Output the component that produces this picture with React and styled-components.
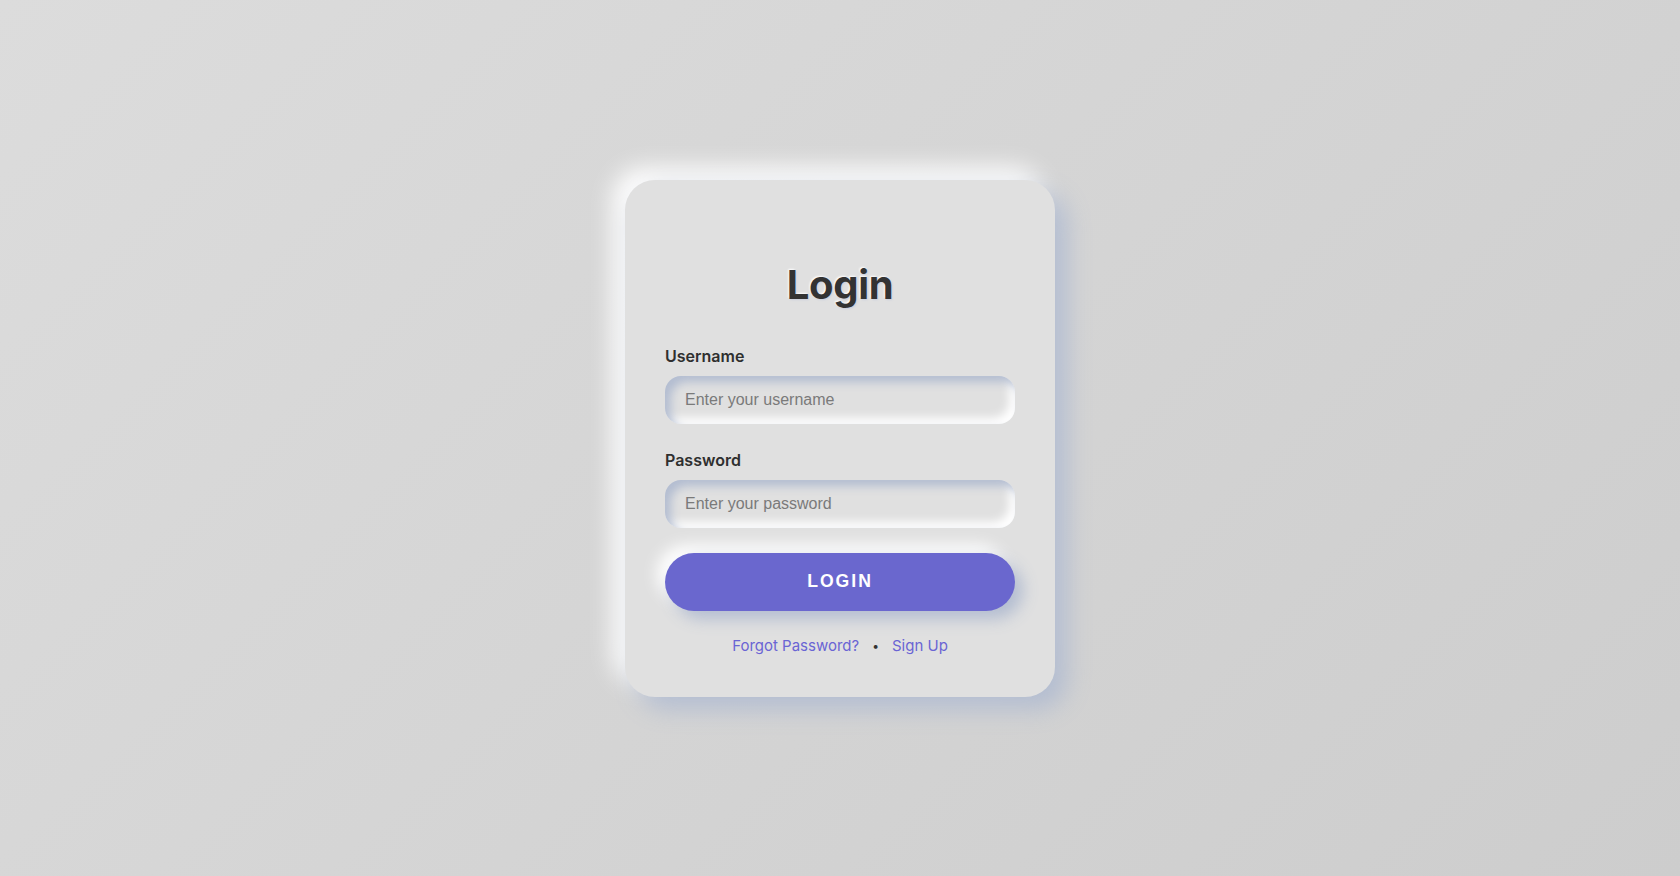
import React from "react";
import styled, { createGlobalStyle } from "styled-components";

const GlobalStyle = createGlobalStyle`
  * { box-sizing: border-box; }
  html, body { margin: 0; padding: 0; }
  body {
    font-family: Inter, "Noto Sans", sans-serif;
    background: linear-gradient(135deg, #dcdcdc 0%, #cdcdcd 100%);
    min-height: 100vh;
  }
`;

const Page = styled.div`
  height: 876px;
  display: flex;
  align-items: center;
  justify-content: center;
`;

const Card = styled.form`
  width: 430px;
  padding: 40px;
  background: #e0e0e0;
  border-radius: 30px;
  box-shadow: 12px 12px 24px #b3bdd1, -12px -12px 24px #ffffff;
  display: flex;
  flex-direction: column;
`;

const Title = styled.h2`
  margin: 41px 0 35px;
  font-family: Inter, sans-serif;
  font-size: 40px;
  line-height: 48px;
  font-weight: 700;
  color: #333333;
  text-align: center;
  letter-spacing: -0.3px;
  text-shadow: 1px 1px 2px #c8cedd, -1px -1px 2px #ffffff;
`;

const Group = styled.div`
  display: flex;
  flex-direction: column;
  margin-bottom: ${(p) => p.$mb || 24}px;
`;

const Label = styled.label`
  font-family: Inter, sans-serif;
  font-size: 16px;
  line-height: 24px;
  font-weight: 600;
  color: #2f2f2f;
  margin-bottom: 8px;
`;

const Input = styled.input`
  height: 48px;
  width: 100%;
  border: none;
  outline: none;
  border-radius: 16px;
  background: #e0e0e0;
  padding: 0 20px;
  font-family: "Liberation Sans", Arial, sans-serif;
  font-size: 16px;
  color: #333;
  box-shadow: inset 6px 6px 10px #b3bdd1, inset -6px -6px 10px #ffffff;
  &::placeholder { color: #7a7a7a; }
`;

const Button = styled.button`
  height: 58px;
  width: 100%;
  border: none;
  border-radius: 29px;
  background: #6a67ce;
  color: #ffffff;
  font-family: "Liberation Sans", Arial, sans-serif;
  font-weight: 700;
  font-size: 17.6px;
  letter-spacing: 2px;
  cursor: pointer;
  box-shadow: 8px 8px 16px #b3bdd1, -8px -8px 16px #ffffff;
`;

const Links = styled.div`
  margin-top: 24px;
  display: flex;
  justify-content: center;
  align-items: center;
  font-family: Inter, sans-serif;
  font-size: 15px;
  line-height: 22px;
`;

const Link = styled.a`
  color: #6a64d4;
  text-decoration: none;
`;

const Dot = styled.span`
  color: #333;
  margin: 0 13px;
  font-size: 12px;
`;

export default function App() {
  return (
    <>
      <GlobalStyle />
      <Page>
        <Card onSubmit={(e) => e.preventDefault()}>
          <Title>Login</Title>
          <Group>
            <Label htmlFor="username">Username</Label>
            <Input id="username" type="text" placeholder="Enter your username" />
          </Group>
          <Group $mb={25}>
            <Label htmlFor="password">Password</Label>
            <Input id="password" type="password" placeholder="Enter your password" />
          </Group>
          <Button type="submit">LOGIN</Button>
          <Links>
            <Link href="#">Forgot Password?</Link>
            <Dot>•</Dot>
            <Link href="#">Sign Up</Link>
          </Links>
        </Card>
      </Page>
    </>
  );
}
